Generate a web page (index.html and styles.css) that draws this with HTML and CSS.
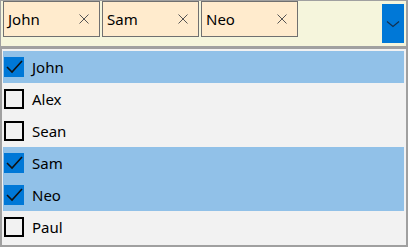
FILE: index.html
```html
<!DOCTYPE html>
<html lang="en">
<head>
  <meta charset="UTF-8">
  <title>Multi Select</title>
  <link rel="stylesheet" href="styles.css">
</head>
<body>

  <div class="combo">
    <div class="chip"><span>John</span><svg class="close" width="10" height="10" viewBox="0 0 10 10"><path d="M0.5 0.5 L9.5 9.5 M9.5 0.5 L0.5 9.5" stroke="#555" stroke-width="1"/></svg></div>
    <div class="chip"><span>Sam</span><svg class="close" width="10" height="10" viewBox="0 0 10 10"><path d="M0.5 0.5 L9.5 9.5 M9.5 0.5 L0.5 9.5" stroke="#555" stroke-width="1"/></svg></div>
    <div class="chip"><span>Neo</span><svg class="close" width="10" height="10" viewBox="0 0 10 10"><path d="M0.5 0.5 L9.5 9.5 M9.5 0.5 L0.5 9.5" stroke="#555" stroke-width="1"/></svg></div>
    <button class="toggle">
      <svg width="14" height="8" viewBox="0 0 14 8"><path d="M1 1.5 L7 6.5 L13 1.5" fill="none" stroke="#12304f" stroke-width="1.2"/></svg>
    </button>
  </div>

  <div class="popup">
    <div class="row selected"><span class="check on"></span>John</div>
    <div class="row"><span class="check"></span>Alex</div>
    <div class="row"><span class="check"></span>Sean</div>
    <div class="row selected"><span class="check on"></span>Sam</div>
    <div class="row selected"><span class="check on"></span>Neo</div>
    <div class="row"><span class="check"></span>Paul</div>
  </div>

</body>
</html>
```

FILE: styles.css
```css
* {
  margin: 0;
  padding: 0;
  box-sizing: border-box;
  font-family: 'Noto Sans', sans-serif;
}

body {
  background: #a0a0a0;
  width: 408px;
  height: 247px;
  overflow: hidden;
  padding-top: 1px;
}

.combo {
  background: #f5f5dc;
  height: 45px;
  margin: 0 2px 0 1px;
  padding-left: 2px;
  display: flex;
  gap: 2px;
}

.chip {
  width: 97px;
  height: 36px;
  background: #ffebcd;
  border: 1px solid #707070;
  display: flex;
  align-items: center;
  justify-content: space-between;
  padding: 0 10px 0 4px;
  font-size: 15px;
  color: #000;
}

.toggle {
  margin: 3px 2px 0 auto;
  width: 22px;
  height: 39px;
  border: none;
  background: #0078d7;
  display: flex;
  align-items: center;
  justify-content: center;
}

.popup {
  background: #f2f2f2;
  margin: 3px 2px 0 2px;
  height: 196px;
  padding: 2px 2px 2px 1px;
}

.row {
  height: 32px;
  display: flex;
  align-items: center;
  gap: 8px;
  padding-left: 1px;
  font-size: 15px;
  color: #000;
}

.row.selected {
  background: #91c1e8;
}

.check {
  width: 20px;
  height: 20px;
  border: 2px solid #000;
}

.check.on {
  border: none;
  background: #0078d7 url("data:image/svg+xml;utf8,<svg xmlns='http://www.w3.org/2000/svg' width='20' height='20'><path d='M3 10 L8 15 L18 4' fill='none' stroke='%23111' stroke-width='1.6'/></svg>") no-repeat center;
}
```
